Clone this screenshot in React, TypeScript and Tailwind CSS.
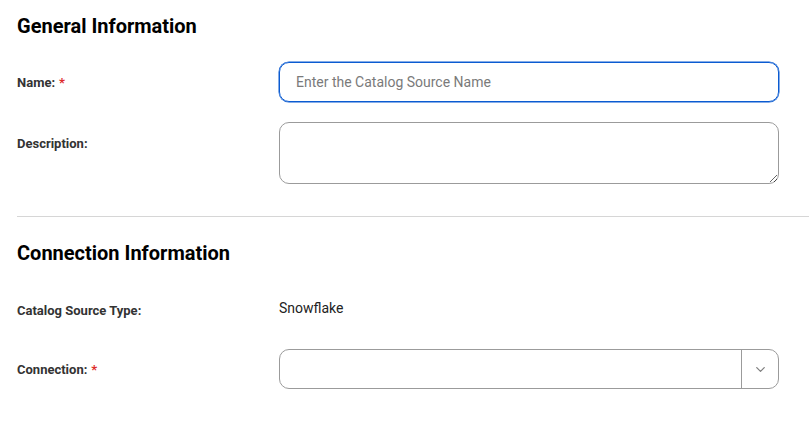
import { ChevronDown } from 'lucide-react';

const font = { fontFamily: 'Roboto, "Liberation Sans", sans-serif' };

function Label({ text, required }: { text: string; required?: boolean }) {
  return (
    <span className="text-[13px] font-bold text-[#333333]">
      {text}
      {required && <span className="ml-1 text-[#de2c2c]">*</span>}
    </span>
  );
}

export default function App() {
  return (
    <div className="min-h-[435px] bg-white pl-[17px] pt-3" style={font}>
      {/* General */}
      <h2 className="text-[20px] font-bold leading-[28px] text-black">General Information</h2>

      <div className="mt-[22px] flex items-center">
        <div className="w-[262px]">
          <Label text="Name:" required />
        </div>
        <input
          autoFocus
          placeholder="Enter the Catalog Source Name"
          className="h-[40px] w-[500px] rounded-[10px] border border-[#0b5bd1] px-4 text-[14px] text-[#333] outline-none placeholder:text-[#7a7a7a] focus:shadow-[0_0_0_0.5px_#0b5bd1]"
        />
      </div>

      <div className="mt-[20px] flex items-start">
        <div className="w-[262px] pt-[9px]">
          <Label text="Description:" />
        </div>
        <textarea className="h-[62px] w-[500px] rounded-[10px] border border-[#9b9b9b] px-4 py-2 text-[14px] outline-none" />
      </div>

      <div className="mt-[32px] h-px bg-[#d6d6d6]" />

      {/* Connection */}
      <h2 className="mt-[22px] text-[20px] font-bold leading-[28px] text-black">Connection Information</h2>

      <div className="mt-[31px] flex items-center">
        <div className="w-[262px]">
          <Label text="Catalog Source Type:" />
        </div>
        <span className="-mt-[3px] text-[14px] text-[#222]">Snowflake</span>
      </div>

      <div className="mt-[27px] flex items-center">
        <div className="w-[262px]">
          <Label text="Connection:" required />
        </div>
        <div className="flex h-[40px] w-[500px] items-stretch rounded-[10px] border border-[#9b9b9b]">
          <div className="flex-1" />
          <div className="flex w-[37px] items-center justify-center border-l border-[#9b9b9b]">
            <ChevronDown size={15} strokeWidth={2} className="text-[#7f7f7f]" />
          </div>
        </div>
      </div>
    </div>
  );
}
